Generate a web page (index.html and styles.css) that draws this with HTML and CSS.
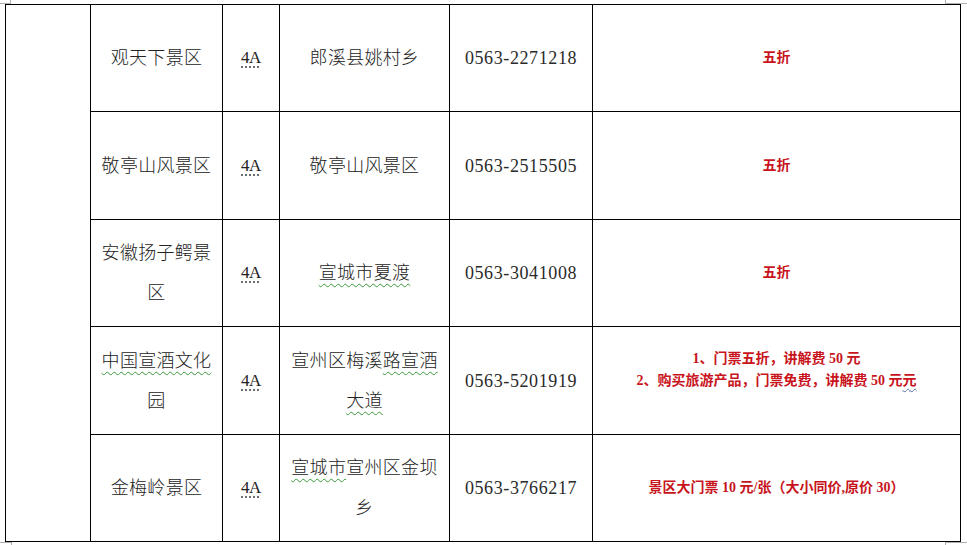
FILE: index.html
```html
<!DOCTYPE html>
<html lang="zh-CN">
<head>
<meta charset="utf-8">
<title>景区优惠</title>
<link rel="stylesheet" href="styles.css">
</head>
<body>
<div class="page">
  <div class="mark mark-tl"></div>
  <div class="mark mark-tr"></div>
  <div class="mark mark-bl"></div>
  <div class="mark mark-br"></div>
  <div class="sheet">
    <div class="cell side"></div>

    <div class="cell name"><div class="txt">观天下景区</div></div>
    <div class="cell grade"><div class="txt"><span class="dot">4A</span></div></div>
    <div class="cell addr"><div class="txt">郎溪县姚村乡</div></div>
    <div class="cell phone"><div class="txt">0563-2271218</div></div>
    <div class="cell offer"><div class="txt">五折</div></div>

    <div class="cell name"><div class="txt">敬亭山风景区</div></div>
    <div class="cell grade"><div class="txt"><span class="dot">4A</span></div></div>
    <div class="cell addr"><div class="txt">敬亭山风景区</div></div>
    <div class="cell phone"><div class="txt">0563-2515505</div></div>
    <div class="cell offer"><div class="txt">五折</div></div>

    <div class="cell name"><div class="txt">安徽扬子鳄景区</div></div>
    <div class="cell grade"><div class="txt"><span class="dot">4A</span></div></div>
    <div class="cell addr"><div class="txt"><span class="wave">宣城市夏渡</span></div></div>
    <div class="cell phone"><div class="txt">0563-3041008</div></div>
    <div class="cell offer"><div class="txt">五折</div></div>

    <div class="cell name"><div class="txt"><span class="wave">中国宣酒文化</span>园</div></div>
    <div class="cell grade"><div class="txt"><span class="dot">4A</span></div></div>
    <div class="cell addr"><div class="txt">宣州区梅溪<span class="wave">路宣酒</span><span class="wave">大道</span></div></div>
    <div class="cell phone"><div class="txt">0563-5201919</div></div>
    <div class="cell offer"><div class="txt">1、门票五折，讲解费 50 元<br>2、购买旅游产品，门票免费，讲解费 50 元<span class="wave-blue">元</span><br>&nbsp;</div></div>

    <div class="cell name"><div class="txt">金梅岭景区</div></div>
    <div class="cell grade"><div class="txt"><span class="dot">4A</span></div></div>
    <div class="cell addr"><div class="txt"><span class="wave">宣城市</span>宣州区金坝乡</div></div>
    <div class="cell phone"><div class="txt">0563-3766217</div></div>
    <div class="cell offer"><div class="txt">景区大门票 10 元/张（大小同价,原价 30）</div></div>
  </div>
</div>
</body>
</html>
```
FILE: styles.css
```css
html, body {
  margin: 0;
  padding: 0;
  background: #ffffff;
}

.page {
  position: relative;
  width: 967px;
  height: 545px;
  overflow: hidden;
  padding: 4px 0 0 5px;
  box-sizing: border-box;
  font-family: "Liberation Serif", "Noto Sans CJK SC", serif;
  color: #222;
}

.sheet {
  display: grid;
  grid-template-columns: 84px 131px 56px 169px 142px 367px;
  grid-template-rows: 106px 107px 106px 107px 106px;
  gap: 1px;
  width: 956px;
  box-sizing: border-box;
  border: 1px solid #000;
  background: #000;
}

.cell {
  background: #fff;
  display: flex;
  align-items: center;
  justify-content: center;
  text-align: center;
  padding: 0 7px;
  box-sizing: border-box;
  font-size: 18px;
  line-height: 40px;
  letter-spacing: 0.3px;
  font-weight: 300;
}

.txt {
  width: 100%;
}

.side {
  grid-row: 1 / span 5;
}

.phone {
  letter-spacing: 0.6px;
  font-weight: 400;
  color: #2a2a2a;
}

.grade {
  font-size: 17px;
  font-weight: 400;
  letter-spacing: -0.5px;
}

.dot {
  text-decoration: underline dotted #555;
  text-underline-offset: 4px;
}

.wave {
  text-decoration: underline wavy #3a9a3a;
  text-decoration-thickness: 1px;
  text-underline-offset: 4px;
}

.wave-blue {
  text-decoration: underline wavy #5a6aa0;
  text-decoration-thickness: 1px;
  text-underline-offset: 3px;
}

.offer {
  color: #c8141c;
  font-size: 14px;
  font-weight: 700;
  line-height: 22px;
  letter-spacing: 0;
}

.mark {
  position: absolute;
  width: 10px;
  height: 3px;
  border-color: #b0b0b0;
  border-style: solid;
  border-width: 0;
}

.mark-tl {
  left: 0;
  top: 0;
  border-right-width: 1px;
  border-bottom-width: 1px;
}

.mark-tr {
  left: 945px;
  top: 0;
  width: 22px;
  border-left-width: 1px;
  border-bottom-width: 1px;
}

.mark-bl {
  left: 0;
  top: 542px;
  width: 11px;
  border-right-width: 1px;
  border-top-width: 1px;
}

.mark-br {
  left: 945px;
  top: 542px;
  width: 22px;
  border-left-width: 1px;
  border-top-width: 1px;
}
```
